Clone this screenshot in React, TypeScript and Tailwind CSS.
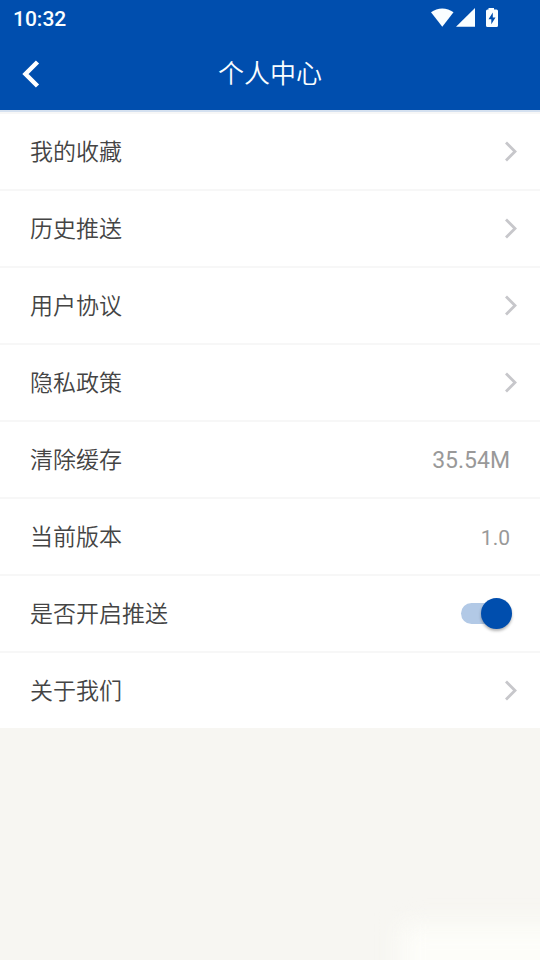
import React, { useState } from "react";

const links = ["我的收藏", "历史推送", "用户协议", "隐私政策"];

const rowClass =
  "flex w-full h-[77px] items-center justify-between border-t-2 border-[#f7f7f7] pl-[30px] text-left";

const Chevron = () => (
  <svg width="14" height="22" viewBox="0 0 14 22" fill="none" aria-hidden="true">
    <path d="M2 1.5L11 10.5L2 19.5" stroke="#c7c7cb" strokeWidth="2.8" />
  </svg>
);

const StatusBar = () => (
  <div className="flex h-[37px] items-center justify-between pl-[13px] pr-[42px]">
    <span className="text-[21px] leading-6 font-medium">10:32</span>
    <div className="flex h-full items-start pt-2">
      <svg width="67" height="20" viewBox="0 0 67 20" fill="#fafeff" aria-hidden="true">
        <path d="M0 4.2C6.5-.9 16-.9 22.5 4.2L11.3 18.8Z" />
        <path d="M44 0V18.8H25Z" />
        <path
          fillRule="evenodd"
          d="M57.5 0H63V1.5H65.5Q67 1.5 67 3V17.5Q67 19 65.5 19H56.5Q55 19 55 17.5V3Q55 1.5 56.5 1.5H57.5ZM61.8 4.5L57.5 11.2H60.3V16.3L64.5 9.4H61.8Z"
        />
      </svg>
    </div>
  </div>
);

const LinkRow = ({ label }: { label: string }) => (
  <li>
    <a href="#" className={`${rowClass} pr-[22px]`}>
      <span className="pt-0.5">{label}</span>
      <Chevron />
    </a>
  </li>
);

const App = () => {
  const [push, setPush] = useState(true);

  return (
    <div className="relative flex min-h-screen flex-col overflow-hidden bg-[#f7f6f2] font-[Roboto,'Noto_Sans_CJK_SC',sans-serif] text-[#444444]">
      <header className="border-b-2 border-[#d5e1f0] bg-[#004eae] bg-clip-padding text-[#fafeff]">
        <StatusBar />
        <div className="grid h-[73px] grid-cols-[60px_1fr_60px] items-center">
          <button type="button" aria-label="返回" className="flex h-full items-center pl-[22px]">
            <svg width="18" height="28" viewBox="0 0 18 28" fill="none" aria-hidden="true">
              <path d="M15.5 2L3.5 14L15.5 26" stroke="white" strokeWidth="4.5" />
            </svg>
          </button>
          <h1 className="text-center text-[26px] leading-8 font-[350]">个人中心</h1>
        </div>
      </header>

      <ul className="bg-white text-[23px] leading-8 font-[350]">
        {links.map((label) => (
          <LinkRow key={label} label={label} />
        ))}
        <li>
          <button type="button" className={`${rowClass} pr-[30px]`}>
            <span className="pt-0.5">清除缓存</span>
            <span className="pt-0.5 font-normal text-[#999999]">35.54M</span>
          </button>
        </li>
        <li className={`${rowClass} pr-[30px]`}>
          <span className="pt-0.5">当前版本</span>
          <span className="pt-0.5 text-[21px] font-normal text-[#999999]">1.0</span>
        </li>
        <li className={`${rowClass} pr-7`}>
          <label htmlFor="push" className="pt-0.5">
            是否开启推送
          </label>
          <input
            id="push"
            type="checkbox"
            role="switch"
            checked={push}
            onChange={(e) => setPush(e.target.checked)}
            className="flex h-[21px] w-[51px] appearance-none items-center rounded-full bg-[#d0d0d0] before:h-[31px] before:w-[31px] before:shrink-0 before:rounded-full before:bg-white before:shadow-[0_2px_3px_rgba(0,0,0,0.3)] before:content-[''] checked:justify-end checked:bg-[#b2c9e6] checked:before:bg-[#004eae]"
          />
        </li>
        <LinkRow label="关于我们" />
      </ul>

      <div className="pointer-events-none absolute -right-10 -bottom-10 h-[76px] w-[180px] bg-[#fdfdf9] blur-[12px]" />
    </div>
  );
};

export default App;
